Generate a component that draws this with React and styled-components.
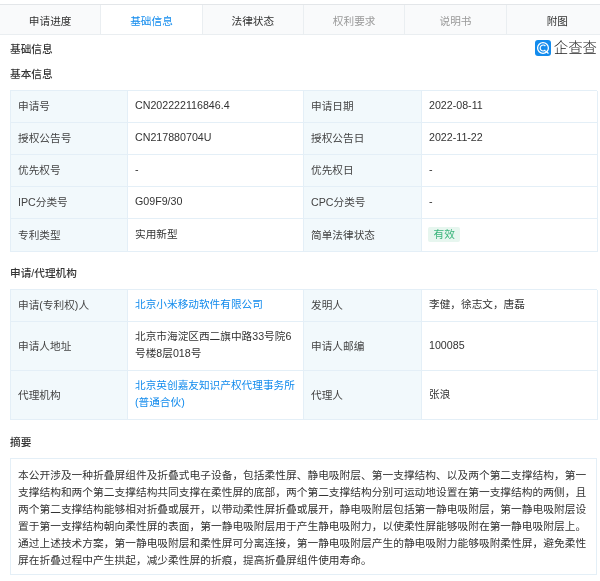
import React from "react";
import styled, { createGlobalStyle } from "styled-components";

const Global = createGlobalStyle`
  html, body { margin: 0; padding: 0; background: #fff; }
  body { font-family: "Liberation Sans", "Noto Sans CJK SC", sans-serif; font-size: 10.67px; color: #333; }
`;
const Page = styled.div`
  width: 600px; height: 581px; overflow: hidden; padding-top: 4px; box-sizing: border-box; position: relative;
  filter: blur(0.35px);
`;
const Tabs = styled.div`
  display: grid; grid-template-columns: repeat(6, 101.33px); height: 31px; box-sizing: border-box;
  background: #f9fafb; border-top: 1px solid #e3e6e9; border-bottom: 1px solid #eaeef1;
  width: 608px;
`;
const Tab = styled.div`
  display: flex; align-items: center; justify-content: center;
  padding-top: 1px; box-sizing: border-box;
  font-size: 10.67px;
  border-right: 1px solid #eaeef1;
  background: ${p => (p.$active ? "#fff" : "transparent")};
  color: ${p => (p.$active ? "#128bed" : p.$muted ? "#999" : "#333")};
  &:last-child { border-right: none; }
`;
const Heading = styled.div`
  display: flex; justify-content: space-between; align-items: center;
  height: 26px; margin: 0 3px 0 10px;
  font-size: 10.67px; font-weight: 500; color: #333;
`;
const Logo = styled.div`
  display: flex; align-items: center; gap: 2.5px;
  font-size: 14.4px; font-weight: 300; color: #222; line-height: 16px;
`;
const SubTitle = styled.div`
  margin: ${p => p.$m}; padding-left: 10px; line-height: 16px;
  font-size: 10.67px; font-weight: 500; color: #333;
`;
const Table = styled.div`
  margin: 0 3px 0 10px; display: grid; grid-template-columns: 117px 176px 118px 176px;
  border-top: 1px solid #e4eff7; border-left: 1px solid #e4eff7; box-sizing: border-box;
`;
const Label = styled.div`
  display: flex; align-items: center; padding: 0 0 2px 7px; box-sizing: border-box;
  min-height: ${p => p.$h}px; background: #f2f9fc; color: #444;
  border-right: 1px solid #e4eff7; border-bottom: 1px solid #e4eff7;
`;
const Value = styled.div`
  display: flex; align-items: center; padding: 0 6px 2px 7px; box-sizing: border-box;
  min-height: ${p => p.$h}px; line-height: 17px;
  color: ${p => (p.$link ? "#128bed" : "#333")};
  border-right: 1px solid #e4eff7; border-bottom: 1px solid #e4eff7;
`;
const Badge = styled.span`
  background: #e7f6ef; color: #3bb57b; padding: 0 5.5px; margin-left: -1px; height: 15px; line-height: 15px; border-radius: 2px; font-size: 10.67px;
`;
const Abstract = styled.div`
  margin: 0 3px 0 10px; padding: 8px 6px 8px 7px; height: 117px; box-sizing: border-box;
  border: 1px solid #e4eff7; line-height: 16.9px; color: #333; font-size: 10.72px;
`;
const Mark = () => (
  <svg width="16" height="16" viewBox="0 0 16 16">
    <rect width="16" height="16" rx="3" fill="#128bed" />
    <circle cx="8" cy="8" r="5.4" fill="none" stroke="#fff" strokeWidth="1.3" />
    <path d="M10.4 6 A3 3 0 1 0 10.4 10" fill="none" stroke="#fff" strokeWidth="1.2" />
    <path d="M10.5 11 L13.5 13.5" stroke="#fff" strokeWidth="1.4" />
  </svg>
);
const tabs = [["申请进度"], ["基础信息", "a"], ["法律状态"], ["权利要求", "m"], ["说明书", "m"], ["附图"]];
const basic = [
  ["申请号", "CN202222116846.4", "申请日期", "2022-08-11"],
  ["授权公告号", "CN217880704U", "授权公告日", "2022-11-22"],
  ["优先权号", "-", "优先权日", "-"],
  ["IPC分类号", "G09F9/30", "CPC分类号", "-"],
];
export default function App() {
  return (
    <Page>
      <Global />
      <Tabs>
        {tabs.map(([t, k]) => (
          <Tab key={t} $active={k === "a"} $muted={k === "m"}>{t}</Tab>
        ))}
      </Tabs>
      <Heading>
        基础信息
        <Logo><Mark />企查查</Logo>
      </Heading>
      <SubTitle $m="5px 0 8px">基本信息</SubTitle>
      <Table>
        {basic.map(r => (
          <React.Fragment key={r[0]}>
            <Label $h={32}>{r[0]}</Label><Value $h={32}>{r[1]}</Value>
            <Label $h={32}>{r[2]}</Label><Value $h={32}>{r[3]}</Value>
          </React.Fragment>
        ))}
        <Label $h={33}>专利类型</Label><Value $h={33}>实用新型</Value>
        <Label $h={33}>简单法律状态</Label><Value $h={33}><Badge>有效</Badge></Value>
      </Table>
      <SubTitle $m="13px 0 8px">申请/代理机构</SubTitle>
      <Table>
        <Label $h={32}>申请(专利权)人</Label><Value $h={32} $link>北京小米移动软件有限公司</Value>
        <Label $h={32}>发明人</Label><Value $h={32}>李健，徐志文，唐磊</Value>
        <Label $h={49}>申请人地址</Label><Value $h={49}>北京市海淀区西二旗中路33号院6号楼8层018号</Value>
        <Label $h={49}>申请人邮编</Label><Value $h={49}>100085</Value>
        <Label $h={49}>代理机构</Label><Value $h={49} $link>北京英创嘉友知识产权代理事务所(普通合伙)</Value>
        <Label $h={49}>代理人</Label><Value $h={49}>张浪</Value>
      </Table>
      <SubTitle $m="14px 0 8px">摘要</SubTitle>
      <Abstract>
        本公开涉及一种折叠屏组件及折叠式电子设备，包括柔性屏、静电吸附层、第一支撑结构、以及两个第二支撑结构，第一支撑结构和两个第二支撑结构共同支撑在柔性屏的底部，两个第二支撑结构分别可运动地设置在第一支撑结构的两侧，且两个第二支撑结构能够相对折叠或展开，以带动柔性屏折叠或展开，静电吸附层包括第一静电吸附层，第一静电吸附层设置于第一支撑结构朝向柔性屏的表面，第一静电吸附层用于产生静电吸附力，以使柔性屏能够吸附在第一静电吸附层上。通过上述技术方案，第一静电吸附层和柔性屏可分离连接，第一静电吸附层产生的静电吸附力能够吸附柔性屏，避免柔性屏在折叠过程中产生拱起，减少柔性屏的折痕，提高折叠屏组件使用寿命。
      </Abstract>
    </Page>
  );
}
